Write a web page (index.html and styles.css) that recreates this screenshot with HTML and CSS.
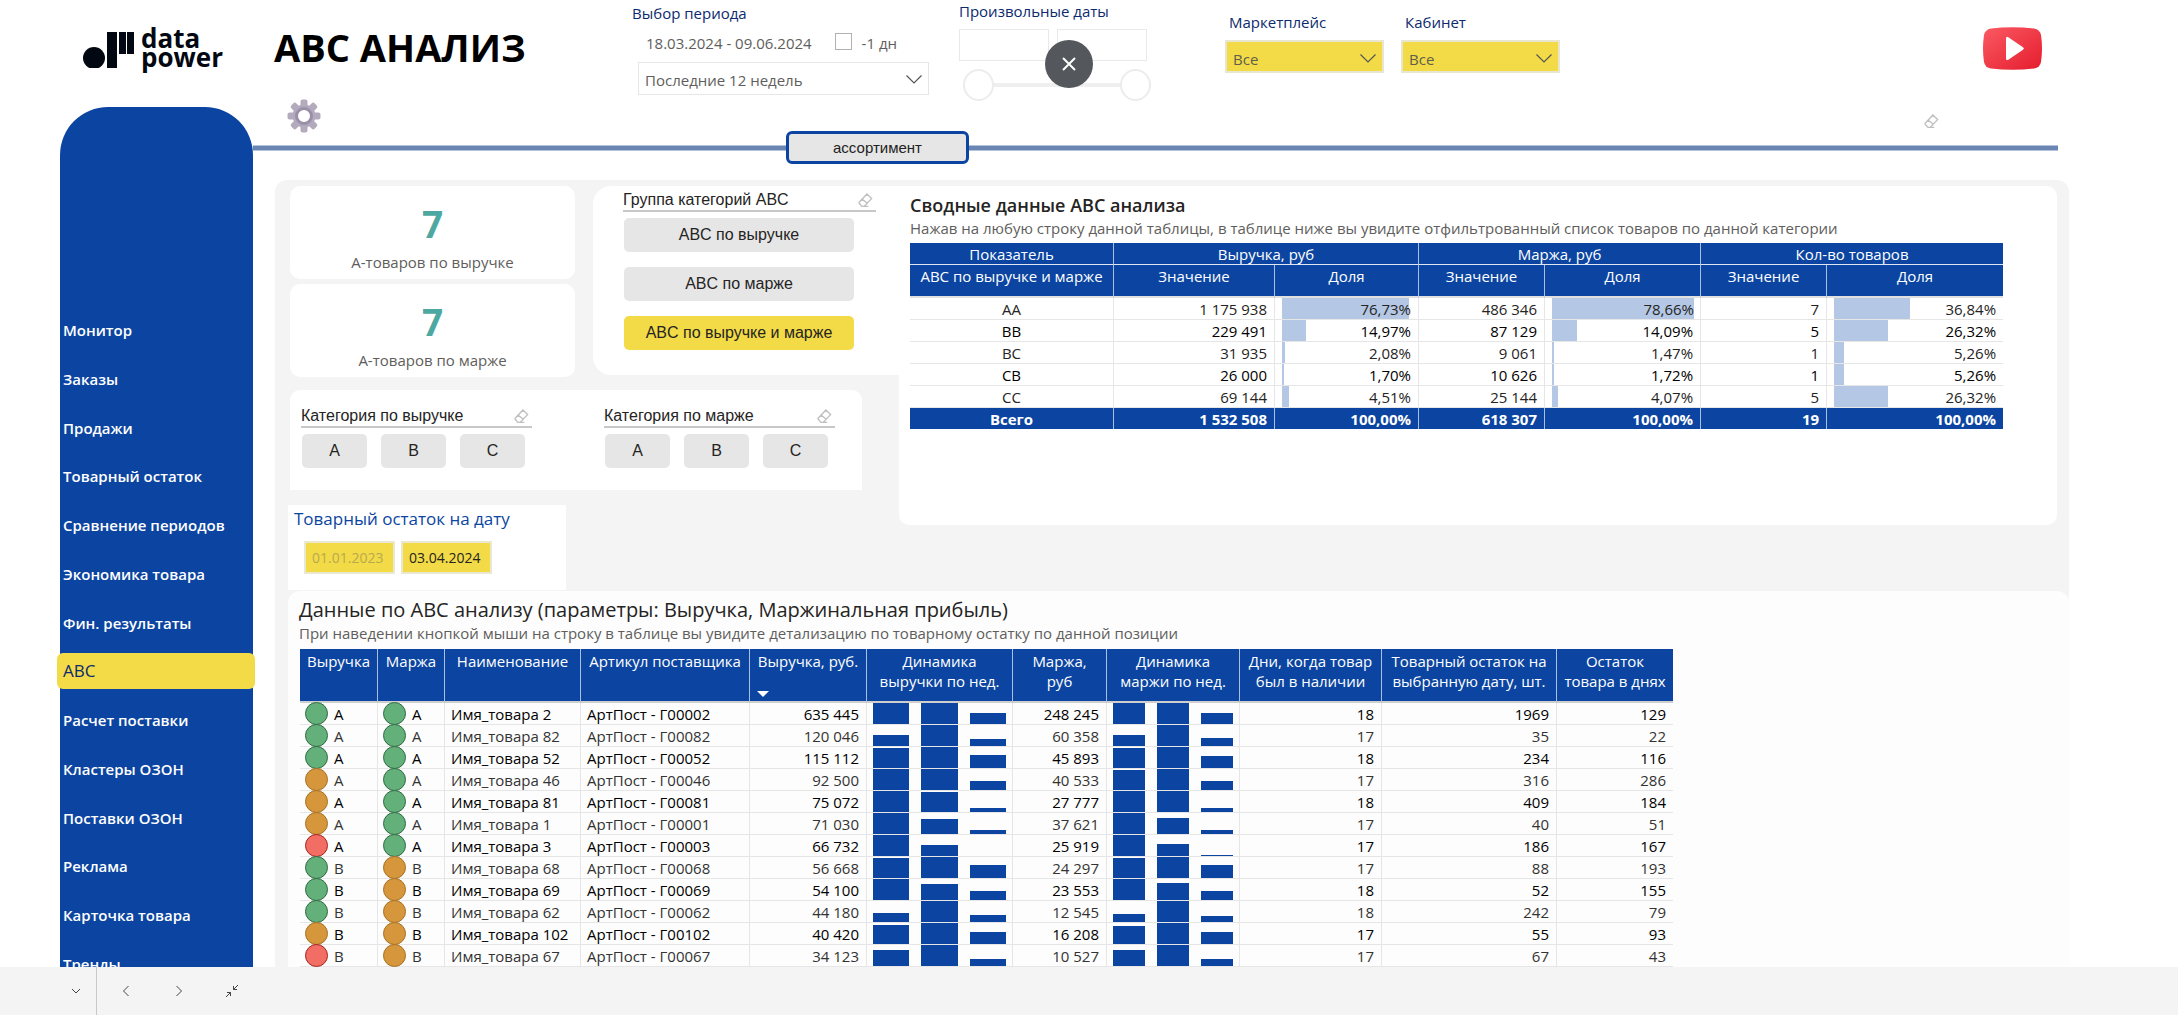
FILE: index.html
```html
<!DOCTYPE html>
<html lang="ru">
<head>
<meta charset="utf-8">
<meta name="viewport" content="width=device-width, initial-scale=1">
<title>ABC анализ</title>
<link rel="stylesheet" href="styles.css">
</head>
<body>
<svg class="defs" aria-hidden="true">
  <symbol id="eraser" viewBox="0 0 16 16"><path d="M9.500 1 14.500 6 6.500 14.300H4.200L1.500 11.200Q.8 10.400 1.500 9.600ZM4.600 6.700 10 11M6 14.300H11" fill="none" stroke="currentColor" stroke-width="1.500"/></symbol>
  <symbol id="chevron" viewBox="0 0 16 9"><path d="M.5.5 8 8 15.500.5" fill="none" stroke="currentColor" stroke-width="1.200"/></symbol>
</svg>

<div class="viewport">
  <header class="header">
    <a class="logo" href="#" aria-label="data power">
      <svg class="logo-mark" viewBox="0 0 52 36" aria-hidden="true"><circle cx="11" cy="26" r="11"/><path d="M24 0h10v36H24zM36 0h7v22H36zM44 0h7v22H44z"/></svg>
      <span class="logo-text">data<br>power</span>
    </a>
    <h1 class="title">АВС АНАЛИЗ</h1>
    <div class="period">
      <label class="label" for="period">Выбор периода</label>
      <div class="period-row">
        <span>18.03.2024 - 09.06.2024</span>
        <label class="check"><input type="checkbox">-1 дн</label>
      </div>
      <div class="select select-plain">
        <select id="period"><option>Последние 12 недель</option></select>
        <svg class="chevron"><use href="#chevron"/></svg>
      </div>
    </div>
    <div class="dates">
      <span class="label">Произвольные даты</span>
      <div class="date-fields">
        <input type="text" aria-label="Дата начала">
        <input type="text" aria-label="Дата окончания">
      </div>
      <div class="range">
        <input type="range" min="0" max="100" value="0" aria-label="Начало">
        <input type="range" min="0" max="100" value="100" aria-label="Окончание">
      </div>
      <button class="close" type="button" aria-label="Закрыть">
        <svg viewBox="0 0 14 14" aria-hidden="true"><path d="M1 1 13 13M13 1 1 13" stroke="#fff" stroke-width="2"/></svg>
      </button>
    </div>
    <div class="scopes">
      <div class="scope">
        <label class="label" for="market">Маркетплейс</label>
        <div class="select select-yellow">
          <select id="market"><option>Все</option></select>
          <svg class="chevron"><use href="#chevron"/></svg>
        </div>
      </div>
      <div class="scope">
        <label class="label" for="cabinet">Кабинет</label>
        <div class="select select-yellow">
          <select id="cabinet"><option>Все</option></select>
          <svg class="chevron"><use href="#chevron"/></svg>
        </div>
      </div>
    </div>
    <a class="video" href="#" aria-label="Видео">
      <svg viewBox="0 0 59 43" aria-hidden="true">
        <defs><linearGradient id="red" x1="0" y1="0" x2="1" y2="1"><stop offset="0" stop-color="#fa5a63"/><stop offset="1" stop-color="#e51c2e"/></linearGradient></defs>
        <path d="M8 1.500Q29.500-1 51 1.500 57 2.500 58 8 60 21.500 58 35 57 40.500 51 41.500 29.500 44 8 41.500 2 40.500 1 35-1 21.500 1 8 2 2.500 8 1.500Z" fill="url(#red)"/>
        <path d="M23 11.500Q23 9 25.300 10.200L40 20.300Q41.800 21.500 40 22.800L25.300 32.800Q23 34 23 31.500Z" fill="#fff"/>
      </svg>
    </a>
  </header>

  <div class="body">
    <nav class="sidebar">
      <ul class="menu">
        <li><a href="#">Монитор</a></li>
        <li><a href="#">Заказы</a></li>
        <li><a href="#">Продажи</a></li>
        <li><a href="#">Товарный остаток</a></li>
        <li><a href="#">Сравнение периодов</a></li>
        <li><a href="#">Экономика товара</a></li>
        <li><a href="#">Фин. результаты</a></li>
        <li><a class="active" href="#" aria-current="page">ABC</a></li>
        <li><a href="#">Расчет поставки</a></li>
        <li><a href="#">Кластеры ОЗОН</a></li>
        <li><a href="#">Поставки ОЗОН</a></li>
        <li><a href="#">Реклама</a></li>
        <li><a href="#">Карточка товара</a></li>
        <li><a href="#">Тренды</a></li>
      </ul>
    </nav>

    <main class="main">
      <div class="tools">
        <button class="icon-button" type="button" aria-label="Настройки">
          <svg class="gear" viewBox="-17 -17 34 34" aria-hidden="true">
            <g fill="#b3abbd"><circle r="11.500"/><g id="teeth"><rect x="-3.500" y="-16.500" width="7" height="33" rx="2"/><rect x="-16.500" y="-3.500" width="33" height="7" rx="2"/></g><use href="#teeth" transform="rotate(45)"/></g>
            <circle r="7.500" fill="#fff" stroke="#9a8fa8" stroke-width="3"/>
          </svg>
        </button>
        <button class="icon-button" type="button" aria-label="Сбросить фильтры"><svg class="eraser"><use href="#eraser"/></svg></button>
      </div>
      <div class="tabs">
        <span class="line line-start"></span>
        <button class="tab" type="button">ассортимент</button>
        <span class="line line-end"></span>
      </div>

      <div class="panel">
        <div class="upper">
          <div class="left">
            <div class="filters">
              <div class="top-filters">
                <div class="kpis">
                  <section class="kpi"><b>7</b><span>А-товаров по выручке</span></section>
                  <section class="kpi"><b>7</b><span>А-товаров по марже</span></section>
                </div>
                <section class="group">
                  <div class="slicer-head"><span>Группа категорий ABC</span><svg class="eraser"><use href="#eraser"/></svg></div>
                  <div class="group-buttons">
                    <button class="chip" type="button">ABC по выручке</button>
                    <button class="chip" type="button">ABC по марже</button>
                    <button class="chip chip-on" type="button">ABC по выручке и марже</button>
                  </div>
                </section>
              </div>
              <section class="categories">
                <div class="category">
                  <div class="slicer-head"><span>Категория по выручке</span><svg class="eraser"><use href="#eraser"/></svg></div>
                  <div class="letters"><button class="chip" type="button">A</button><button class="chip" type="button">B</button><button class="chip" type="button">C</button></div>
                </div>
                <div class="category">
                  <div class="slicer-head"><span>Категория по марже</span><svg class="eraser"><use href="#eraser"/></svg></div>
                  <div class="letters"><button class="chip" type="button">A</button><button class="chip" type="button">B</button><button class="chip" type="button">C</button></div>
                </div>
              </section>
            </div>
            <section class="stock">
              <h2>Товарный остаток на дату</h2>
              <div class="stock-fields">
                <input type="text" value="01.01.2023" aria-label="С даты" disabled>
                <input type="text" value="03.04.2024" aria-label="На дату">
              </div>
            </section>
          </div>

          <section class="summary">
            <h2>Сводные данные АВС анализа</h2>
            <p>Нажав на любую строку данной таблицы, в таблице ниже вы увидите отфильтрованный список товаров по данной категории</p>
            <table class="sum-table">
              <colgroup><col class="s1"><col class="s2"><col class="s3"><col class="s4"><col class="s5"><col class="s6"><col class="s7"></colgroup>
              <thead>
                <tr><th>Показатель</th><th colspan="2">Выручка, руб</th><th colspan="2">Маржа, руб</th><th colspan="2">Кол-во товаров</th></tr>
                <tr class="sub"><th>АВС по выручке и марже</th><th>Значение</th><th>Доля</th><th>Значение</th><th>Доля</th><th>Значение</th><th>Доля</th></tr>
              </thead>
              <tbody>
                <tr><td>AA</td><td>1 175 938</td><td><div class="share"><i style="width:127px"></i><span>76,73%</span></div></td><td>486 346</td><td><div class="share"><i style="width:142px"></i><span>78,66%</span></div></td><td>7</td><td><div class="share"><i style="width:76px"></i><span>36,84%</span></div></td></tr>
                <tr><td>BB</td><td>229 491</td><td><div class="share"><i style="width:24px"></i><span>14,97%</span></div></td><td>87 129</td><td><div class="share"><i style="width:25px"></i><span>14,09%</span></div></td><td>5</td><td><div class="share"><i style="width:54px"></i><span>26,32%</span></div></td></tr>
                <tr><td>BC</td><td>31 935</td><td><div class="share"><i style="width:3px"></i><span>2,08%</span></div></td><td>9 061</td><td><div class="share"><i style="width:2px"></i><span>1,47%</span></div></td><td>1</td><td><div class="share"><i style="width:10px"></i><span>5,26%</span></div></td></tr>
                <tr><td>CB</td><td>26 000</td><td><div class="share"><i style="width:2px"></i><span>1,70%</span></div></td><td>10 626</td><td><div class="share"><i style="width:2px"></i><span>1,72%</span></div></td><td>1</td><td><div class="share"><i style="width:10px"></i><span>5,26%</span></div></td></tr>
                <tr><td>CC</td><td>69 144</td><td><div class="share"><i style="width:7px"></i><span>4,51%</span></div></td><td>25 144</td><td><div class="share"><i style="width:6px"></i><span>4,07%</span></div></td><td>5</td><td><div class="share"><i style="width:54px"></i><span>26,32%</span></div></td></tr>
              </tbody>
              <tfoot>
                <tr><td>Всего</td><td>1 532 508</td><td>100,00%</td><td>618 307</td><td>100,00%</td><td>19</td><td>100,00%</td></tr>
              </tfoot>
            </table>
          </section>
        </div>

        <section class="details">
          <h2>Данные по АВС анализу (параметры: Выручка, Маржинальная прибыль)</h2>
          <p>При наведении кнопкой мыши на строку в таблице вы увидите детализацию по товарному остатку по данной позиции</p>
          <table class="data-table">
            <colgroup><col class="d1"><col class="d2"><col class="d3"><col class="d4"><col class="d5"><col class="d6"><col class="d7"><col class="d8"><col class="d9"><col class="d10"><col class="d11"></colgroup>
            <thead>
              <tr><th>Выручка</th><th>Маржа</th><th>Наименование</th><th>Артикул поставщика</th><th class="sorted">Выручка, руб.<i></i></th><th>Динамика<br>выручки по нед.</th><th>Маржа,<br>руб</th><th>Динамика<br>маржи по нед.</th><th>Дни, когда товар<br>был в наличии</th><th>Товарный остаток на<br>выбранную дату, шт.</th><th>Остаток<br>товара в днях</th></tr>
            </thead>
            <tbody>
              <tr><td><div class="grade green">A</div></td><td><div class="grade green">A</div></td><td>Имя_товара 2</td><td>АртПост - Г00002</td><td>635 445</td><td><div class="bars"><i style="height:21px"></i><i style="height:21px"></i><i style="height:11px"></i></div></td><td>248 245</td><td><div class="bars"><i style="height:21px"></i><i style="height:21px"></i><i style="height:11px"></i></div></td><td>18</td><td>1969</td><td>129</td></tr>
              <tr><td><div class="grade green">A</div></td><td><div class="grade green">A</div></td><td>Имя_товара 82</td><td>АртПост - Г00082</td><td>120 046</td><td><div class="bars"><i style="height:11px"></i><i style="height:21px"></i><i style="height:7px"></i></div></td><td>60 358</td><td><div class="bars"><i style="height:11px"></i><i style="height:21px"></i><i style="height:8px"></i></div></td><td>17</td><td>35</td><td>22</td></tr>
              <tr><td><div class="grade green">A</div></td><td><div class="grade green">A</div></td><td>Имя_товара 52</td><td>АртПост - Г00052</td><td>115 112</td><td><div class="bars"><i style="height:20px"></i><i style="height:21px"></i><i style="height:13px"></i></div></td><td>45 893</td><td><div class="bars"><i style="height:20px"></i><i style="height:21px"></i><i style="height:12px"></i></div></td><td>18</td><td>234</td><td>116</td></tr>
              <tr><td><div class="grade amber">A</div></td><td><div class="grade green">A</div></td><td>Имя_товара 46</td><td>АртПост - Г00046</td><td>92 500</td><td><div class="bars"><i style="height:21px"></i><i style="height:21px"></i><i style="height:9px"></i></div></td><td>40 533</td><td><div class="bars"><i style="height:20px"></i><i style="height:21px"></i><i style="height:9px"></i></div></td><td>17</td><td>316</td><td>286</td></tr>
              <tr><td><div class="grade amber">A</div></td><td><div class="grade green">A</div></td><td>Имя_товара 81</td><td>АртПост - Г00081</td><td>75 072</td><td><div class="bars"><i style="height:21px"></i><i style="height:20px"></i><i style="height:4px"></i></div></td><td>27 777</td><td><div class="bars"><i style="height:21px"></i><i style="height:21px"></i><i style="height:4px"></i></div></td><td>18</td><td>409</td><td>184</td></tr>
              <tr><td><div class="grade amber">A</div></td><td><div class="grade green">A</div></td><td>Имя_товара 1</td><td>АртПост - Г00001</td><td>71 030</td><td><div class="bars"><i style="height:21px"></i><i style="height:15px"></i><i style="height:4px"></i></div></td><td>37 621</td><td><div class="bars"><i style="height:21px"></i><i style="height:16px"></i><i style="height:4px"></i></div></td><td>17</td><td>40</td><td>51</td></tr>
              <tr><td><div class="grade red">A</div></td><td><div class="grade green">A</div></td><td>Имя_товара 3</td><td>АртПост - Г00003</td><td>66 732</td><td><div class="bars"><i style="height:21px"></i><i style="height:11px"></i><i style="height:0px"></i></div></td><td>25 919</td><td><div class="bars"><i style="height:21px"></i><i style="height:12px"></i><i style="height:1px"></i></div></td><td>17</td><td>186</td><td>167</td></tr>
              <tr><td><div class="grade green">B</div></td><td><div class="grade amber">B</div></td><td>Имя_товара 68</td><td>АртПост - Г00068</td><td>56 668</td><td><div class="bars"><i style="height:20px"></i><i style="height:21px"></i><i style="height:13px"></i></div></td><td>24 297</td><td><div class="bars"><i style="height:20px"></i><i style="height:21px"></i><i style="height:13px"></i></div></td><td>17</td><td>88</td><td>193</td></tr>
              <tr><td><div class="grade green">B</div></td><td><div class="grade amber">B</div></td><td>Имя_товара 69</td><td>АртПост - Г00069</td><td>54 100</td><td><div class="bars"><i style="height:21px"></i><i style="height:16px"></i><i style="height:9px"></i></div></td><td>23 553</td><td><div class="bars"><i style="height:21px"></i><i style="height:17px"></i><i style="height:9px"></i></div></td><td>18</td><td>52</td><td>155</td></tr>
              <tr><td><div class="grade green">B</div></td><td><div class="grade amber">B</div></td><td>Имя_товара 62</td><td>АртПост - Г00062</td><td>44 180</td><td><div class="bars"><i style="height:9px"></i><i style="height:21px"></i><i style="height:7px"></i></div></td><td>12 545</td><td><div class="bars"><i style="height:8px"></i><i style="height:21px"></i><i style="height:6px"></i></div></td><td>18</td><td>242</td><td>79</td></tr>
              <tr><td><div class="grade amber">B</div></td><td><div class="grade amber">B</div></td><td>Имя_товара 102</td><td>АртПост - Г00102</td><td>40 420</td><td><div class="bars"><i style="height:19px"></i><i style="height:21px"></i><i style="height:12px"></i></div></td><td>16 208</td><td><div class="bars"><i style="height:18px"></i><i style="height:21px"></i><i style="height:12px"></i></div></td><td>17</td><td>55</td><td>93</td></tr>
              <tr><td><div class="grade red">B</div></td><td><div class="grade amber">B</div></td><td>Имя_товара 67</td><td>АртПост - Г00067</td><td>34 123</td><td><div class="bars"><i style="height:16px"></i><i style="height:21px"></i><i style="height:7px"></i></div></td><td>10 527</td><td><div class="bars"><i style="height:16px"></i><i style="height:21px"></i><i style="height:7px"></i></div></td><td>17</td><td>67</td><td>43</td></tr>
            </tbody>
          </table>
        </section>
      </div>
    </main>
  </div>
</div>

<footer class="statusbar">
  <button class="status-button pages" type="button" aria-label="Список страниц"><svg viewBox="0 0 10 10"><path d="M1 3 5 7 9 3"/></svg></button>
  <button class="status-button" type="button" aria-label="Назад"><svg viewBox="0 0 10 10"><path d="M7.500 0 2.500 5 7.500 10"/></svg></button>
  <button class="status-button" type="button" aria-label="Вперёд"><svg viewBox="0 0 10 10"><path d="M2.500 0 7.500 5 2.500 10"/></svg></button>
  <button class="status-button" type="button" aria-label="Выйти из полноэкранного режима"><svg class="shrink" viewBox="0 0 12 12"><path d="M0 12 4.500 7.500M1 7.500H4.500V11M12 0 7.500 4.500M7.500 1V4.500H11"/></svg></button>
</footer>
</body>
</html>
```
FILE: styles.css
```css
:root {
  --blue: #0b45a1;
  --navy: #0c2a6e;
  --yellow: #f2db46;
  --panel: #f4f4f4;
  --chip: #e6e6e6;
  --rule: #e6e6e6;
  --muted: #605e5c;
}

* { box-sizing: border-box; }

body {
  margin: 0;
  height: 100vh;
  display: flex;
  flex-direction: column;
  background: #fff;
  color: #252423;
  font: 15px/20px "Open Sans", "Noto Sans", sans-serif;
}

button, input, select { font: inherit; color: inherit; margin: 0; padding: 0; border: 0; background: none; border-radius: 0; }
h1, h2, p, ul { margin: 0; padding: 0; }
ul { list-style: none; }
a { color: inherit; text-decoration: none; }
svg { display: block; }
.defs { display: none; }

.viewport { flex: 1; min-height: 0; overflow: hidden; }

/* Header */
.header {
  display: grid;
  grid-template-columns: 274px 358px 327px 266px 1fr auto;
  height: 97px;
  padding-right: 136px;
}
.logo { display: flex; align-items: flex-start; gap: 6px; padding: 28px 0 0 83px; color: #020812; }
.logo-mark { width: 52px; height: 36px; margin-top: 4px; fill: #020812; }
.logo-text { padding-top: 1px; font-size: 26px; line-height: 19px; font-weight: 700; }
.title { padding-top: 23px; color: #000; font-size: 38px; line-height: 48px; font-weight: 700; white-space: nowrap; }
.label { display: block; color: var(--navy); line-height: 20px; }
.period { padding-top: 3px; color: var(--muted); }
.period-row { display: flex; gap: 23px; padding: 10px 0 0 14px; height: 39px; white-space: nowrap; }
.check { display: flex; gap: 10px; }
.check input { appearance: none; width: 17px; height: 17px; border: 1px solid #b3b0ad; }
.select { display: grid; align-items: center; }
.select select { grid-area: 1 / 1; appearance: none; width: 100%; height: 33px; padding-left: 6px; }
.select .chevron { grid-area: 1 / 1; justify-self: end; width: 16px; height: 9px; margin-right: 6px; color: #555; pointer-events: none; }
.select-plain { width: 291px; margin-left: 6px; border: 1px solid #e6e6e6; height: 33px; }
.select-yellow { width: 159px; background: var(--yellow); border: 2px solid #e9e6d0; color: #605e4c; height: 33px; }

.dates { position: relative; padding-top: 1px; }
.date-fields { display: flex; gap: 8px; margin-top: 8px; }
.date-fields input { width: 90px; height: 32px; border: 1px solid #e9e9e9; }
.range { display: flex; width: 188px; height: 32px; margin: 8px 0 0 4px; }
.range input { appearance: none; width: 94px; height: 32px; background: linear-gradient(#efefef, #efefef) center / 100% 4px no-repeat; }
.range input::-webkit-slider-thumb { appearance: none; width: 31px; height: 32px; border: 2px solid #ececec; border-radius: 50%; background: #fff; }
.close { position: absolute; left: 86px; top: 40px; display: grid; place-items: center; width: 48px; height: 48px; border-radius: 50%; background: #54575b; }
.close svg { width: 14px; height: 14px; }

.scopes { display: flex; gap: 17px; padding-top: 12px; }
.scope .label { padding-left: 4px; margin-bottom: 8px; }
.video { margin-top: 27px; }
.video svg { width: 59px; height: 43px; }

/* Sidebar */
.body { display: flex; }
.sidebar { flex: none; width: 193px; height: 1000px; margin: 10px 0 0 60px; padding-top: 205px; background: var(--blue); border-radius: 48px 48px 0 0; }
.menu { display: flex; flex-direction: column; justify-content: space-between; height: 670px; }
.menu a { display: block; margin: 0 -2px 0 -3px; padding: 8px 6px; color: #fff; font-size: 15px; font-weight: 600; white-space: nowrap; }
.menu .active { background: var(--yellow); border-radius: 6px; color: var(--navy); font-size: 17px; font-weight: 400; }

/* Tools and tabs */
.main { flex: 1; min-width: 0; margin-right: 109px; }
.tools { display: flex; justify-content: space-between; align-items: center; height: 34px; padding: 4px 130px 0 34px; }
.gear { width: 34px; height: 34px; }
.eraser { width: 15px; height: 15px; color: #c0c0c0; }
.tools .eraser { margin-top: 10px; }
.tabs { display: flex; align-items: center; margin-right: 11px; }
.line { height: 6px; background: #6a86b2; border: solid #b4c3da; border-width: 1px 0; }
.line-start { width: 533px; }
.line-end { flex: 1; }
.tab { width: 183px; height: 33px; border: 3px solid var(--blue); border-radius: 6px; background: var(--chip); color: #222; font: 15px/20px "Liberation Sans", Arial, sans-serif; }

/* Report panel */
.panel { margin: 16px 0 0 22px; padding: 6px 0 0 13px; background: var(--panel); border-radius: 12px 12px 0 0; }
.upper { display: grid; grid-template-columns: 611px 1fr; align-items: start; padding-right: 12px; }
.filters { padding-left: 2px; }
.top-filters { display: grid; grid-template-columns: 285px 1fr; gap: 18px; align-items: start; }
.kpis { display: grid; gap: 5px; }
.kpi { display: grid; height: 93px; align-content: end; justify-items: center; gap: 10px; padding-bottom: 7px; background: #fff; border-radius: 10px; color: var(--muted); }
.kpi b { color: #4ea8a2; font-size: 37px; line-height: 36px; }

.group { height: 189px; padding: 4px 23px 0 30px; background: #fff; border-radius: 18px 0 0 18px; }
.slicer-head { display: flex; justify-content: space-between; align-items: center; padding-right: 3px; border-bottom: 2px solid #c8c8c8; font: 16px/20px "Liberation Sans", Arial, sans-serif; }
.group-buttons { display: grid; gap: 15px; padding: 6px 22px 0 1px; }
.chip { height: 34px; border-radius: 5px; background: var(--chip); font: 16px/20px "Liberation Sans", Arial, sans-serif; }
.chip-on { background: var(--yellow); }

.categories { display: flex; gap: 72px; width: 572px; height: 100px; margin-top: 13px; padding: 16px 11px 0; background: #fff; border-radius: 10px 10px 0 0; }
.category { width: 231px; }
.letters { display: flex; gap: 14px; padding: 6px 0 0 1px; }
.letters .chip { width: 65px; }

.stock { width: 278px; height: 85px; margin-top: 15px; padding: 3px 6px 0; background: #fff; }
.stock h2 { color: var(--blue); font-size: 17px; line-height: 22px; font-weight: 500; white-space: nowrap; }
.stock-fields { display: flex; gap: 6px; padding: 11px 0 0 10px; }
.stock-fields input { width: 91px; height: 33px; padding-left: 6px; border: 2px solid #ebe8d2; background: var(--yellow); color: #252423; font-size: 14px; }
.stock-fields input:disabled { color: #b9a950; }

.summary { min-height: 339px; padding: 7px 11px; background: #fff; border-radius: 0 10px 10px 10px; }
.summary h2, .details h2 { font-size: 20px; line-height: 24px; font-weight: 500; }
.summary h2 { font-size: 18px; font-weight: 600; }
.summary p, .details p { color: var(--muted); line-height: 22px; white-space: nowrap; }

/* Tables */
table { border-collapse: separate; border-spacing: 0; table-layout: fixed; }
th, td { padding: 0 7px; white-space: nowrap; }
th { background: var(--blue); color: #fff; font-weight: 400; line-height: 20px; vertical-align: top; border-right: 1px solid #a9bfe0; }
td { height: 22px; line-height: 20px; text-align: right; border-right: 1px solid var(--rule); border-bottom: 1px solid var(--rule); }
th:last-child, td:last-child { border-right: 0; }
tbody tr:nth-child(even) td { color: #000; }

.sum-table { width: 1093px; margin-top: 4px; }
.s1 { width: 204px; } .s2 { width: 161px; } .s3 { width: 144px; } .s4 { width: 126px; } .s5 { width: 156px; } .s6 { width: 126px; } .s7 { width: 176px; }
.sum-table th { padding: 1px 0 0; height: 22px; border-bottom: 1px solid #dfe6f2; }
.sum-table .sub th { height: 33px; border-bottom: 2px solid #e0e0e0; }
.sum-table td:first-child { text-align: center; }
.sum-table tfoot td { height: 21px; background: var(--blue); color: #fff; font-weight: 700; border-color: #a9bfe0; border-bottom: 0; }
.share { display: grid; align-items: center; height: 21px; }
.share i { grid-area: 1 / 1; height: 21px; background: #b4c8e6; }
.share span { grid-area: 1 / 1; }

.details { padding: 7px 0 0 11px; background: #fdfdfd; border-radius: 12px 12px 0 0; margin-top: 1px; }
.data-table { width: 1373px; margin: 5px 0 0 1px; }
.d1 { width: 78px; } .d2 { width: 67px; } .d3 { width: 136px; } .d4 { width: 169px; } .d5 { width: 117px; } .d6 { width: 146px; } .d7 { width: 94px; } .d8 { width: 133px; } .d9 { width: 142px; } .d10 { width: 175px; } .d11 { width: 116px; }
.data-table th { height: 54px; padding: 2px 0 0; border-bottom: 2px solid #cfcfcf; }
.data-table td:nth-child(-n+4) { text-align: left; padding-left: 6px; }
.data-table tbody tr td { color: #000; }
.data-table tbody tr:nth-child(even) td { color: #333; }
.data-table .sorted i { display: block; width: 12px; height: 6px; margin: 20px 0 0 7px; background: #fff; clip-path: polygon(0 0, 100% 0, 50% 100%); }
.grade { display: flex; align-items: center; gap: 6px; height: 21px; }
.grade::before { content: ""; width: 21px; height: 21px; margin-left: -1px; border: 1px solid; border-radius: 50%; }
.green::before { background: #64b07a; border-color: #2f6b42; }
.amber::before { background: #d6963c; border-color: #a87022; }
.red::before { background: #f26d64; border-color: #a5231e; }
.bars { display: grid; grid-template-columns: repeat(3, 1fr); column-gap: 12px; align-items: end; height: 21px; margin: 0 -1px; }
.bars i { background: var(--blue); }

/* Bottom bar */
.statusbar { display: flex; flex: none; height: 48px; background: var(--panel); color: #444; }
.status-button { display: grid; place-items: center; width: 53px; height: 48px; }
.status-button svg { width: 10px; height: 10px; fill: none; stroke: currentColor; stroke-width: 1; overflow: visible; }
.status-button .shrink { width: 12px; height: 12px; }
.pages { width: 97px; padding-left: 55px; margin-right: 2px; border-right: 1px solid #c8c8c8; }
```
